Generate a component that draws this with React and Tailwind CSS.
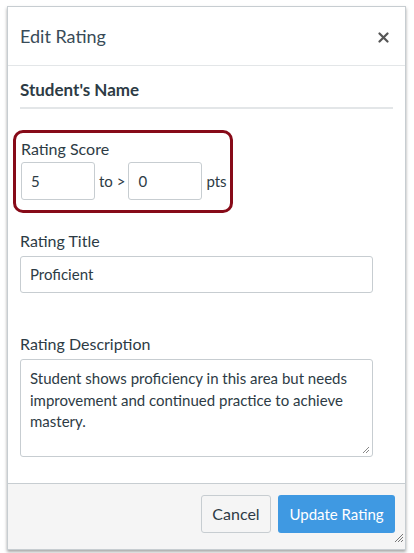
export default function App() {
  return (
    <div className="w-[414px] h-[553px] bg-white overflow-hidden" style={{ fontFamily: "Lato, 'Liberation Sans', sans-serif" }}>
      <div className="ml-[7px] mt-[6px] w-[399px] h-[544px] flex flex-col border border-[#c7cdd1] shadow-[0_2px_3px_rgba(0,0,0,0.35)] bg-white text-[#2d3b45] relative">
        {/* header */}
        <div className="h-[59px] shrink-0 flex items-center justify-between pl-[12px] pr-[16px] border-b border-[#e3e6e8]">
          <h1 className="text-[18px] leading-none text-[#394b58]">Edit Rating</h1>
          <svg width="11" height="11" viewBox="0 0 11 11" className="mt-[2px]">
            <path d="M1.5 1.5 L9.5 9.5 M9.5 1.5 L1.5 9.5" stroke="#555" strokeWidth="2.2" strokeLinecap="round" />
          </svg>
        </div>

        {/* body */}
        <div className="flex-1 pl-[12px] pr-[12px] overflow-hidden">
          <div className="pt-[14px] pb-[7px] border-b-2 border-[#e3e6e8]">
            <h2 className="text-[17px] leading-[20px] font-bold">Student's Name</h2>
          </div>

          <div className="mt-[21px] -ml-[7px] w-[220px] h-[83px] border-[3px] border-[#870a18] rounded-[10px] pl-[5px] pt-[7px]">
            <div className="text-[16px] leading-[18px]">Rating Score</div>
            <div className="mt-[4px] flex items-center">
              <div className="w-[74px] h-[38px] border border-[#c7cdd1] rounded-[3px] pl-[9px] flex items-center text-[15px]">5</div>
              <span className="ml-[4px] mr-[3px] text-[15px]">to &gt;</span>
              <div className="w-[74px] h-[38px] border border-[#c7cdd1] rounded-[3px] pl-[9px] flex items-center text-[15px]">0</div>
              <span className="ml-[4px] text-[15px]">pts</span>
            </div>
          </div>

          <div className="mt-[19px] text-[16px] leading-[18px]">Rating Title</div>
          <div className="mt-[6px] w-[353px] h-[37px] border border-[#c7cdd1] rounded-[3px] pl-[9px] flex items-center text-[15px]">Proficient</div>

          <div className="mt-[42px] text-[16px] leading-[18px]">Rating Description</div>
          <div className="mt-[6px] w-[353px] h-[98px] border border-[#c7cdd1] rounded-[3px] pl-[9px] pr-[8px] pt-[8px] text-[15px] leading-[21.5px] relative">
            Student shows proficiency in this area but needs improvement and continued practice to achieve mastery.
            <svg width="8" height="8" viewBox="0 0 8 8" className="absolute right-[2px] bottom-[2px]">
              <path d="M7 1 L1 7 M7 4 L4 7" stroke="#888" strokeWidth="1" />
            </svg>
          </div>
        </div>

        {/* footer */}
        <div className="h-[66px] shrink-0 bg-[#f5f5f5] border-t border-[#c7cdd1] flex justify-end items-start pt-[11px] pr-[10px] gap-[7px]">
          <button className="w-[70px] h-[38px] border border-[#c7cdd1] rounded-[3px] bg-[#f5f5f5] text-[16px] text-[#2d3b45]">Cancel</button>
          <button className="w-[117px] h-[38px] rounded-[3px] bg-[#3f99e2] text-[15px] text-white">Update Rating</button>
        </div>
        <svg width="11" height="11" viewBox="0 0 11 11" className="absolute right-[1px] bottom-[6px]">
          <path d="M10 2 L2 10 M10 5 L5 10 M10 8 L8 10" stroke="#777" strokeWidth="1" />
        </svg>
      </div>
    </div>
  );
}
